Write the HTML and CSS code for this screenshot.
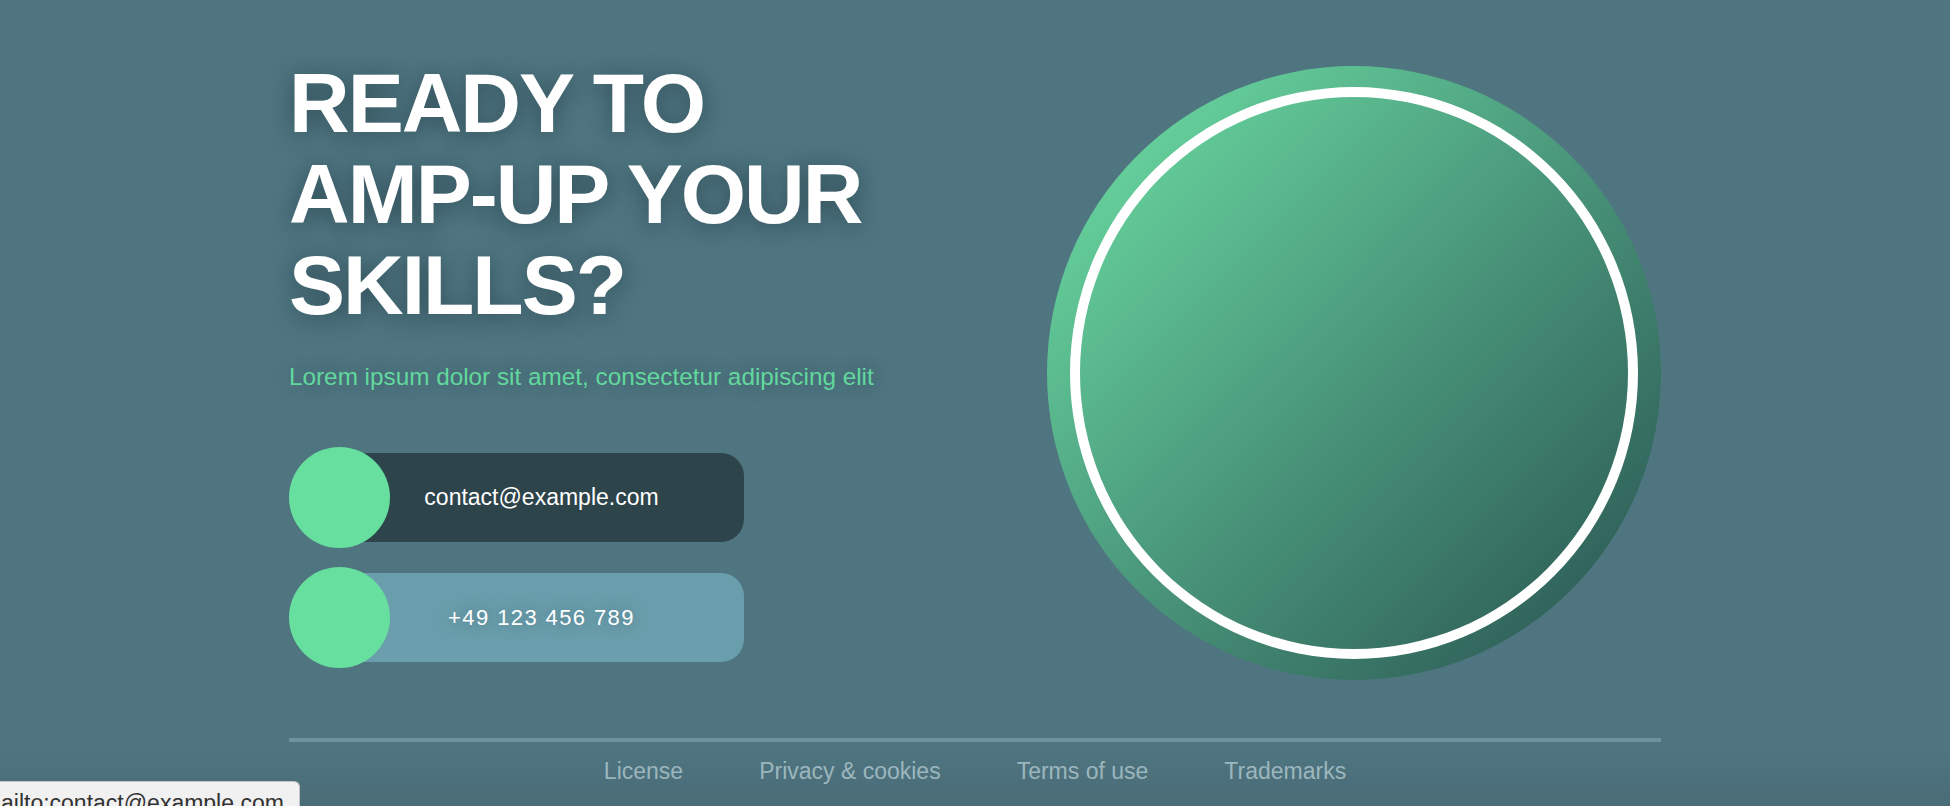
FILE: index.html
```html
<!DOCTYPE html>
<html lang="en">
<head>
<meta charset="utf-8">
<title>Ready to amp-up your skills?</title>
<link rel="stylesheet" href="styles.css">
</head>
<body>
<div class="page">
  <main class="hero">
    <div class="intro">
      <h1 class="title">READY TO<br>AMP-UP YOUR<br>SKILLS?</h1>
      <p class="lead">Lorem ipsum dolor sit amet, consectetur adipiscing elit</p>
      <div class="contacts">
        <a class="contact contact--dark" href="mailto:contact@example.com">
          <span class="contact__dot"></span>
          <span class="contact__bar">contact@example.com</span>
        </a>
        <a class="contact contact--light" href="tel:+49123456789">
          <span class="contact__dot"></span>
          <span class="contact__bar contact__bar--phone">+49 123 456 789</span>
        </a>
      </div>
    </div>
    <div class="orb"><div class="orb__ring"></div></div>
  </main>
  <footer class="footer">
    <nav class="footer__links">
      <a class="footer__link" href="#">License</a>
      <a class="footer__link" href="#">Privacy &amp; cookies</a>
      <a class="footer__link" href="#">Terms of use</a>
      <a class="footer__link" href="#">Trademarks</a>
    </nav>
  </footer>
</div>
<div class="status">ailto:contact@example.com</div>
</body>
</html>
```

FILE: styles.css
```css
html, body {
  margin: 0;
  padding: 0;
}

body {
  height: 806px;
  overflow: hidden;
  background: linear-gradient(to bottom, #4e7580 0, #4e7580 750px, #4a6c77 806px);
  font-family: "Liberation Sans", Arial, sans-serif;
  color: #fff;
}

.page {
  width: 1372px;
  margin: 0 auto;
}

.hero {
  display: flex;
  justify-content: space-between;
  align-items: flex-start;
  padding-top: 58px;
}

.intro {
  display: flex;
  flex-direction: column;
}

.title {
  margin: 0;
  font-size: 84px;
  line-height: 91px;
  font-weight: 700;
  letter-spacing: -2px;
  color: #fff;
  text-shadow: 0 3px 22px rgba(28, 50, 60, 0.6);
}

.lead {
  margin: 31px 0 0;
  font-size: 24.3px;
  line-height: 30px;
  color: #62d89d;
  text-shadow: 0 0 18px rgba(35, 60, 70, 0.35);
}

.contacts {
  margin-top: 55px;
  display: flex;
  flex-direction: column;
  gap: 19px;
}

.contact {
  display: flex;
  align-items: center;
  width: 455px;
  text-decoration: none;
  color: #fff;
}

.contact__dot {
  flex: none;
  width: 101px;
  height: 101px;
  border-radius: 50%;
  background: #66df9f;
  position: relative;
  z-index: 1;
}

.contact__bar {
  flex: 1;
  height: 89px;
  margin-left: -51px;
  border-radius: 23px;
  display: flex;
  align-items: center;
  justify-content: center;
  font-size: 23px;
  color: #fff;
}

.contact--dark .contact__bar {
  background: #2d444b;
}

.contact--light .contact__bar {
  background: #6b9eac;
  text-shadow: 0 0 14px rgba(60, 100, 115, 0.7);
}

.contact__bar--phone {
  font-size: 22px;
  letter-spacing: 1.4px;
}

.orb {
  flex: none;
  margin-top: 8px;
  width: 614px;
  height: 614px;
  border-radius: 50%;
  background: linear-gradient(135deg, #6ee3a6 0%, #4a977b 50%, #27504f 100%);
  display: flex;
  align-items: center;
  justify-content: center;
}

.orb__ring {
  box-sizing: border-box;
  width: 568px;
  height: 572px;
  border: 10px solid #fff;
  border-radius: 50%;
}

.footer {
  margin-top: 58px;
  border-top: 4px solid #6e939c;
  padding-top: 16px;
}

.footer__links {
  display: flex;
  justify-content: center;
  gap: 76px;
}

.footer__link {
  font-size: 23px;
  line-height: 26px;
  color: #9cb6bd;
  text-decoration: none;
}

.status {
  position: fixed;
  left: 0;
  bottom: -10px;
  box-sizing: border-box;
  width: 300px;
  height: 35px;
  padding: 8px 0 0 1px;
  background: #f1f1f1;
  border: 1px solid #c4c4c4;
  border-left: none;
  border-top-right-radius: 6px;
  font-size: 23px;
  line-height: 26px;
  color: #333;
  white-space: nowrap;
  overflow: hidden;
}
```
